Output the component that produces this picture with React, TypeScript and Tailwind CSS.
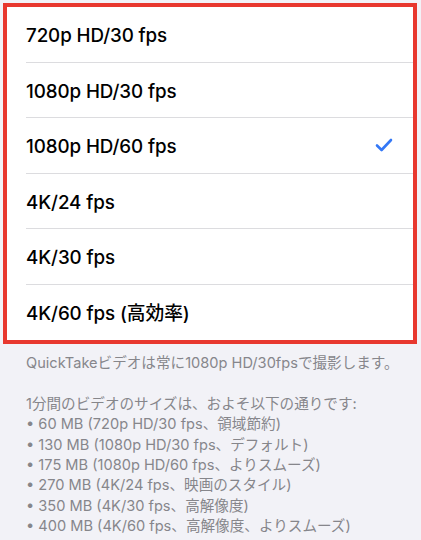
import React from "react";

const options = [
  "720p HD/30 fps",
  "1080p HD/30 fps",
  "1080p HD/60 fps",
  "4K/24 fps",
  "4K/30 fps",
  "4K/60 fps (高効率)",
];

const sizes = [
  "60 MB (720p HD/30 fps、領域節約)",
  "130 MB (1080p HD/30 fps、デフォルト)",
  "175 MB (1080p HD/60 fps、よりスムーズ)",
  "270 MB (4K/24 fps、映画のスタイル)",
  "350 MB (4K/30 fps、高解像度)",
  "400 MB (4K/60 fps、高解像度、よりスムーズ)",
];

function Check() {
  return (
    <svg width="18" height="14" viewBox="0 0 18 14" fill="none">
      <path
        d="M2 7.5 L6.6 12 L16 2"
        stroke="#3478f6"
        strokeWidth="2.6"
        strokeLinecap="round"
        strokeLinejoin="round"
      />
    </svg>
  );
}

export default function App() {
  const selected = 2;
  return (
    <div
      className="w-[421px] h-[540px] overflow-hidden bg-[#f2f2f7] pt-[3px]"
      style={{ fontFamily: "Inter, 'Noto Sans CJK JP', sans-serif" }}
    >
      <div className="ml-[3px] w-[414px] border-4 border-[#e8382f] bg-white">
        {options.map((opt, i) => (
          <div key={opt} className="pl-[19px]">
            <div
              className={`flex h-[55.5px] items-center justify-between pr-[20px] ${
                i < options.length - 1 ? "border-b border-[#dcdcdf]" : ""
              }`}
            >
              <span className="pt-[4px] text-[18.8px] font-medium tracking-[-0.1px] text-black">
                {opt}
              </span>
              {i === selected && <Check />}
            </div>
          </div>
        ))}
      </div>
      <div className="whitespace-nowrap px-[26px] pt-[9px] text-[14.6px] leading-[20.4px] text-[#86868b]">
        <p>QuickTakeビデオは常に1080p HD/30fpsで撮影します。</p>
        <p className="mt-[20.4px]">1分間のビデオのサイズは、およそ以下の通りです:</p>
        {sizes.map((s) => (
          <p key={s}>• {s}</p>
        ))}
      </div>
    </div>
  );
}
